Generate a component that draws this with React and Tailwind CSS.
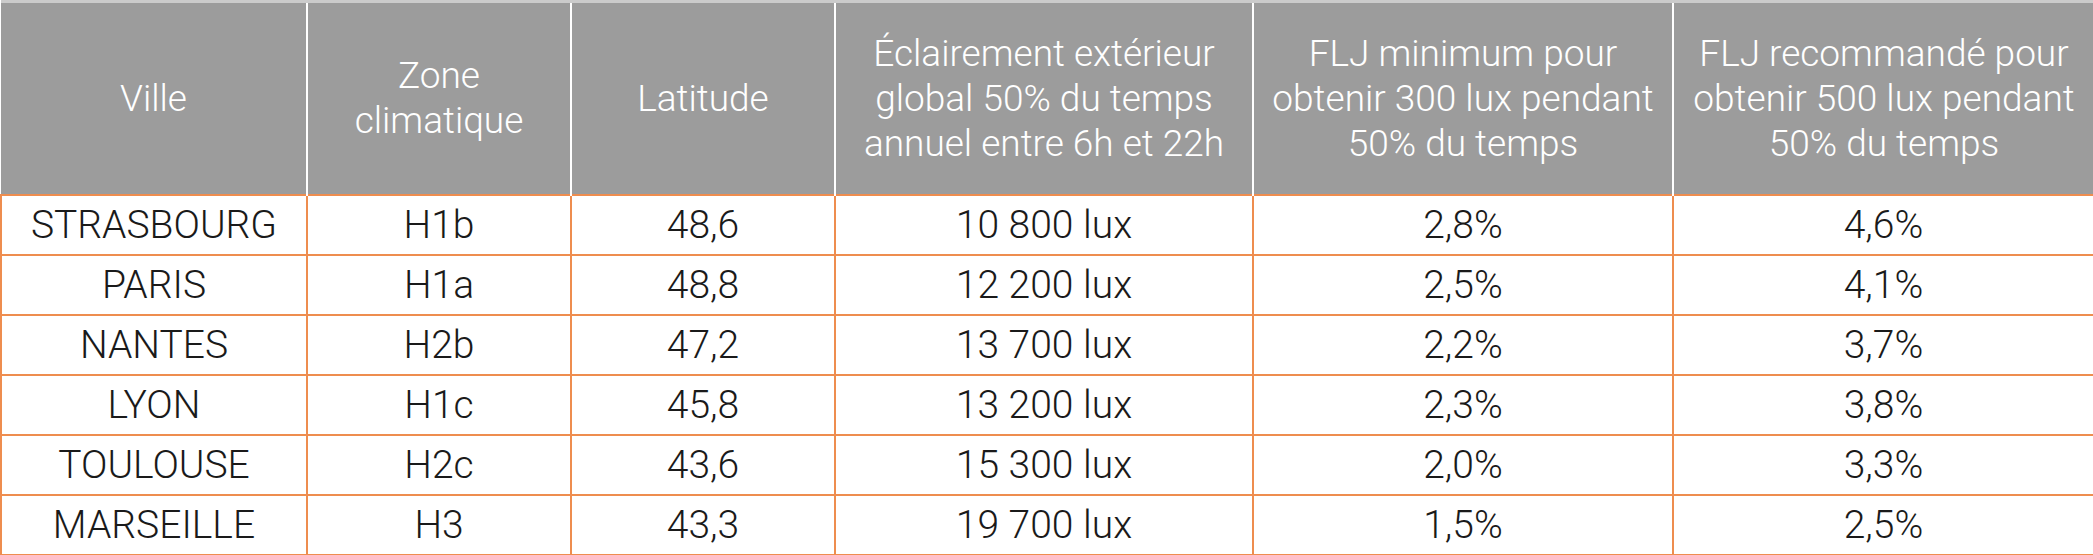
import React from 'react';

const headers = [
  ['Ville'],
  ['Zone', 'climatique'],
  ['Latitude'],
  ['Éclairement extérieur', 'global 50% du temps', 'annuel entre 6h et 22h'],
  ['FLJ minimum pour', 'obtenir 300 lux pendant', '50% du temps'],
  ['FLJ recommandé pour', 'obtenir 500 lux pendant', '50% du temps'],
];

const rows = [
  ['STRASBOURG', 'H1b', '48,6', '10 800 lux', '2,8%', '4,6%'],
  ['PARIS', 'H1a', '48,8', '12 200 lux', '2,5%', '4,1%'],
  ['NANTES', 'H2b', '47,2', '13 700 lux', '2,2%', '3,7%'],
  ['LYON', 'H1c', '45,8', '13 200 lux', '2,3%', '3,8%'],
  ['TOULOUSE', 'H2c', '43,6', '15 300 lux', '2,0%', '3,3%'],
  ['MARSEILLE', 'H3', '43,3', '19 700 lux', '1,5%', '2,5%'],
];

// column widths read off the picture
const widths = [306, 264, 264, 418, 420, 421];

export default function App() {
  return (
    <div className="w-[2093px] h-[555px] bg-white overflow-hidden">
      <table className="table-fixed border-collapse w-[2092px]">
        <colgroup>
          {widths.map((w, i) => (
            <col key={i} style={{ width: w }} />
          ))}
        </colgroup>
        <thead>
          <tr className="h-[193px] bg-[#9c9c9c] border-t-[3px] border-t-[#cbcbcb]">
            {headers.map((lines, i) => (
              <th
                key={i}
                className={
                  'p-0 align-middle text-center font-light text-white text-[37px] leading-[45px] font-["Roboto",sans-serif] ' +
                  (i > 0 ? 'border-l-2 border-l-white' : '')
                }
              >
                {lines.map((l, j) => (
                  <div key={j} className="whitespace-nowrap">{l}</div>
                ))}
              </th>
            ))}
          </tr>
        </thead>
        <tbody>
          {rows.map((r, i) => (
            <tr key={i} className="h-[60px]">
              {r.map((c, j) => (
                <td
                  key={j}
                  className='p-0 text-center align-middle border-2 border-[#ee8d4f] text-[#1a1a1a] text-[39px] leading-[44px] font-light font-["Roboto",sans-serif]'
                >
                  {c}
                </td>
              ))}
            </tr>
          ))}
        </tbody>
      </table>
    </div>
  );
}
